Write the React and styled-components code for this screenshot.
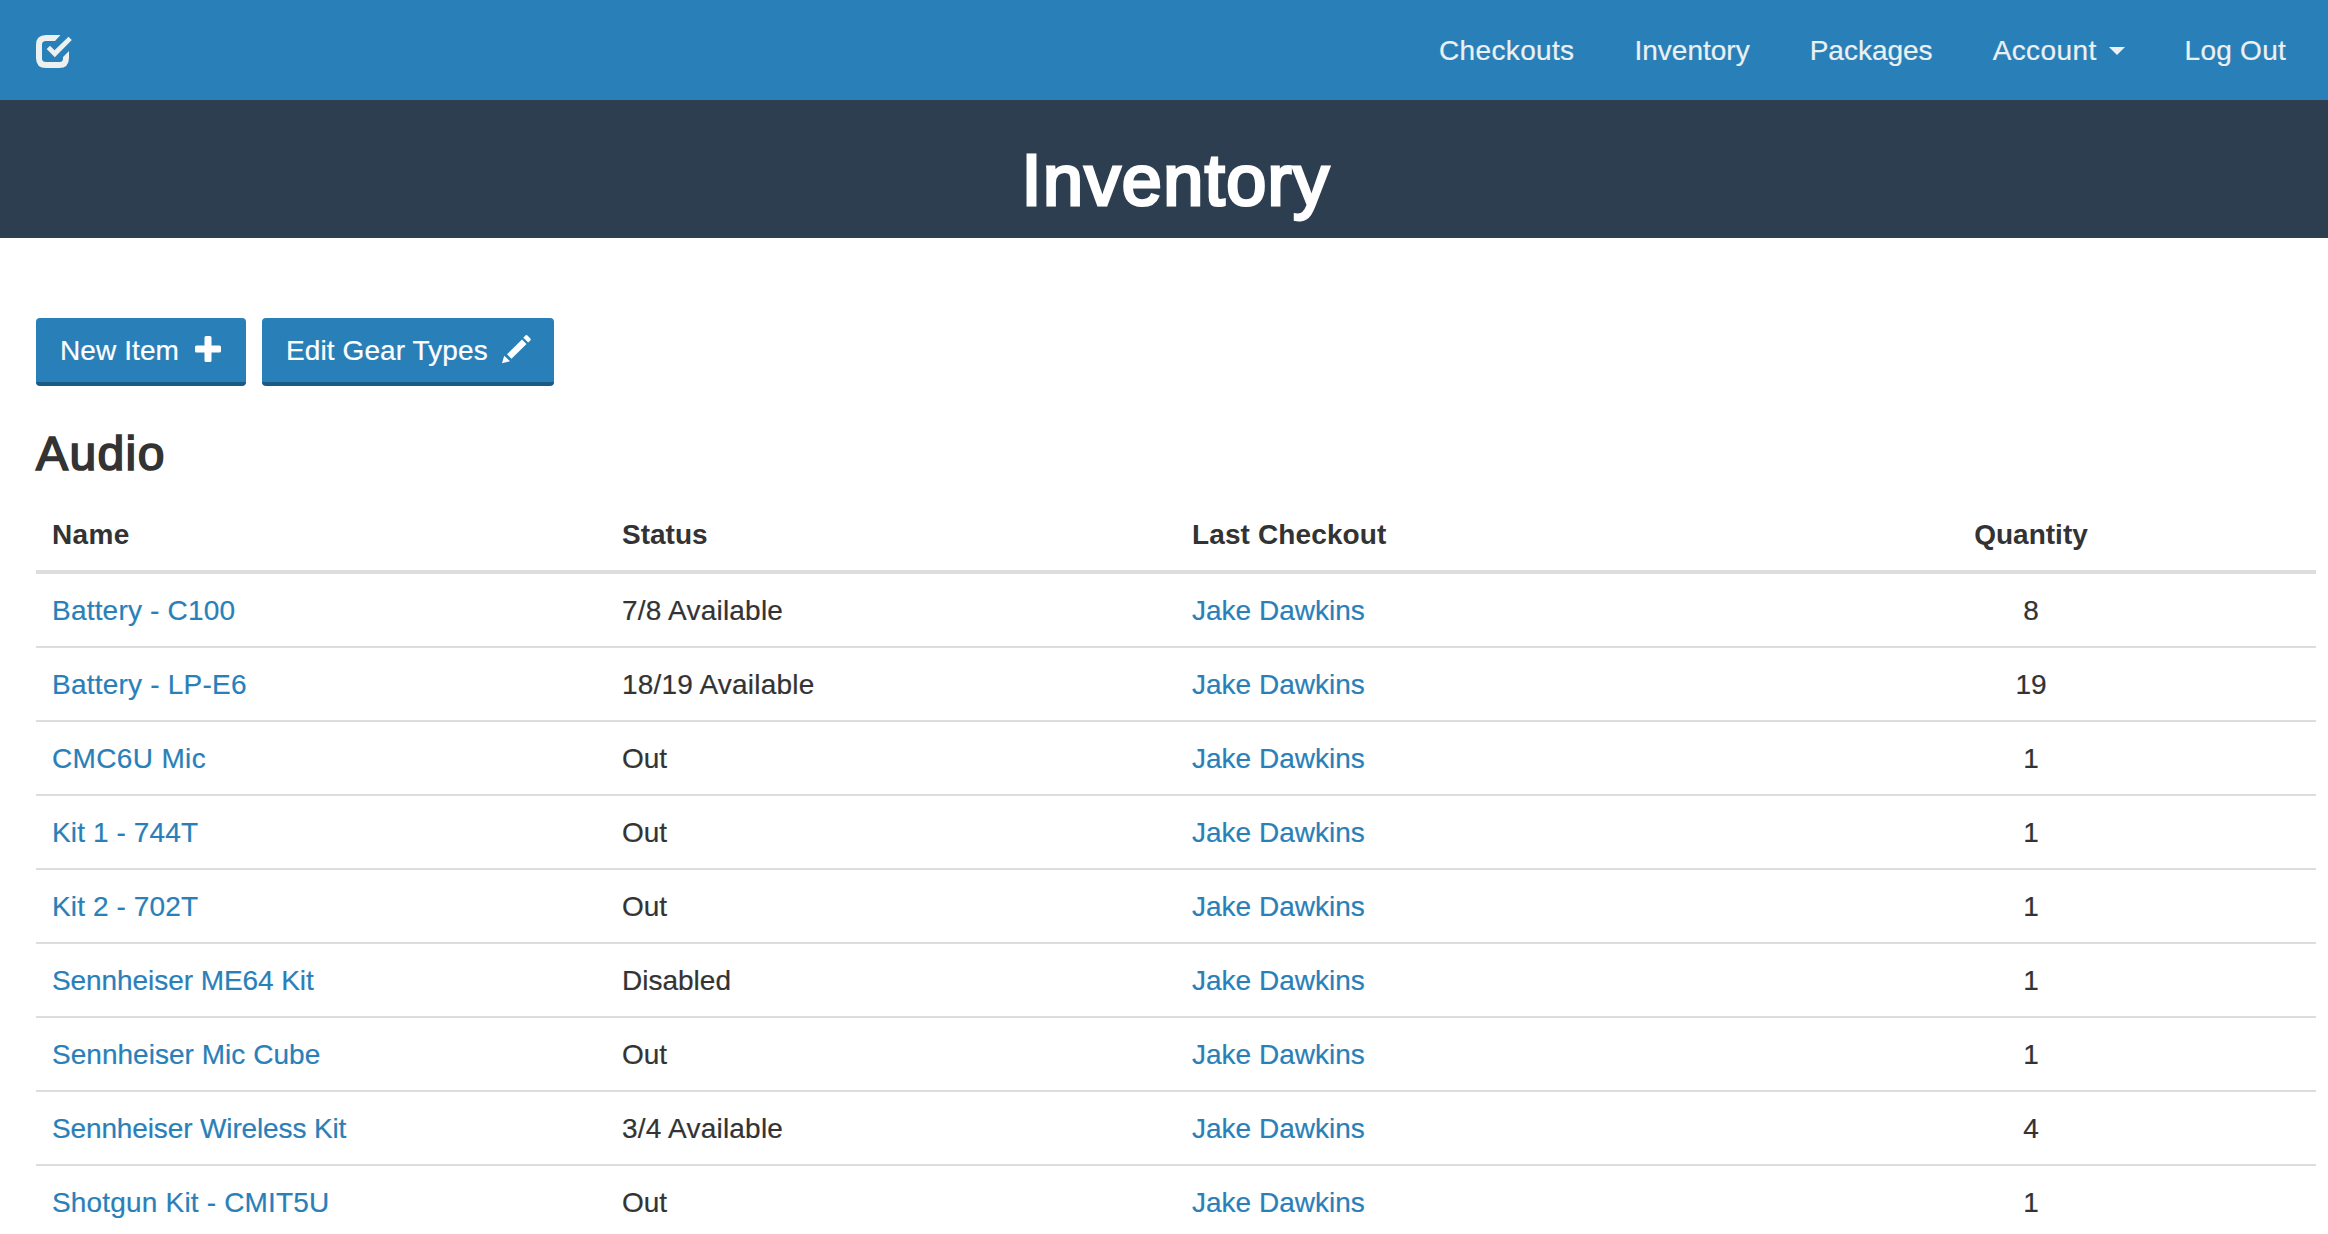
import React from "react";
import styled, { createGlobalStyle } from "styled-components";

const Global = createGlobalStyle`
  * { box-sizing: border-box; }
  body {
    margin: 0;
    height: 1234px;
    overflow: hidden;
    background: #fff;
    color: #333;
    font: 28px/40px "Liberation Sans", Arial, sans-serif;
    -webkit-text-stroke: 0.2px currentColor;
  }
`;

const NavBar = styled.header`
  display: flex;
  align-items: center;
  justify-content: space-between;
  height: 100px;
  padding: 2px 12px 0 36px;
  background: #2980b9;
`;
const LogoLink = styled.a`
  display: flex;
  color: #ecf0f1;
`;
const NavList = styled.nav`
  display: flex;
`;
const NavLink = styled.a`
  display: flex;
  align-items: center;
  padding: 0 30px;
  color: #ecf0f1;
  white-space: nowrap;
  letter-spacing: ${(p) => p.$track || 0}px;
`;
const Caret = styled.span`
  margin-left: 12px;
  border: 8px solid transparent;
  border-top-color: currentColor;
  border-bottom: 0;
`;
const TitleBand = styled.div`
  display: flex;
  justify-content: center;
  height: 138px;
  padding: 40px 12px 0 36px;
  background: #2c3e50;
`;
const Title = styled.h1`
  margin: 0;
  color: #fff;
  font-size: 72px;
  line-height: 81px;
  font-weight: 400;
  letter-spacing: 1.4px;
  -webkit-text-stroke: 3.1px #fff;
`;
const Main = styled.main`
  padding: 80px 12px 0 36px;
`;
const Actions = styled.div`
  display: flex;
  gap: 16px;
`;
const Button = styled.a`
  display: flex;
  align-items: center;
  gap: ${(p) => p.$gap}px;
  width: ${(p) => p.$width}px;
  height: 68px;
  padding: 2px 0 0 24px;
  border-bottom: 4px solid #1c5a85;
  border-radius: 4px;
  background: #2980b9;
  color: #fff;
  white-space: nowrap;
  letter-spacing: 0.1px;

  svg {
    margin-bottom: 4px;
  }
`;
const Section = styled.h2`
  margin: 40px 0 0;
  height: 72px;
  font-size: 48px;
  line-height: 55px;
  font-weight: 400;
  letter-spacing: 1.4px;
  -webkit-text-stroke: 1.7px #333;
`;
const Table = styled.table`
  width: 100%;
  table-layout: fixed;
  border-collapse: separate;
  border-spacing: 0;
`;
const HeadCell = styled.th`
  height: 76px;
  padding: 2px 16px 0;
  border-bottom: 4px solid #ddd;
  text-align: ${(p) => (p.$center ? "center" : "left")};
  letter-spacing: ${(p) => p.$track || 0}px;
  -webkit-text-stroke: 0;
`;
const Cell = styled.td`
  height: 74px;
  padding: 2px 16px 0;
  border-bottom: 2px solid #ddd;
  text-align: ${(p) => (p.$center ? "center" : "left")};
  letter-spacing: ${(p) => p.$track || 0}px;
`;
const ItemLink = styled.a`
  color: #2980b9;
  -webkit-text-stroke: 0.2px #2980b9;
`;

const rows = [
  { name: "Battery - C100", track: 0.2, status: "7/8 Available", statusTrack: 0.22, quantity: 8 },
  { name: "Battery - LP-E6", track: 0.22, status: "18/19 Available", statusTrack: 0.2, quantity: 19 },
  { name: "CMC6U Mic", track: 0.35, status: "Out", quantity: 1 },
  { name: "Kit 1 - 744T", track: 0.12, status: "Out", quantity: 1 },
  { name: "Kit 2 - 702T", track: 0.12, status: "Out", quantity: 1 },
  { name: "Sennheiser ME64 Kit", track: -0.07, status: "Disabled", quantity: 1 },
  { name: "Sennheiser Mic Cube", track: 0.03, status: "Out", quantity: 1 },
  { name: "Sennheiser Wireless Kit", track: -0.13, status: "3/4 Available", statusTrack: 0.22, quantity: 4 },
  { name: "Shotgun Kit - CMIT5U", track: 0.18, status: "Out", quantity: 1 },
];

const CheckLogo = () => (
  <svg width="36" height="34" viewBox="0 0 36 34" fill="currentColor">
    <path d="M24.5 1H10Q0 1 0 11V24Q0 34 10 34H23Q33 34 33 24V17L27 23V24.5Q27 28 23.5 28H10Q6 28 6 24.5V10.5Q6 7 10 7H19Z" />
    <path d="M10.7 15L14 11.7L18.5 16.2L32.5 2.7L35.8 6L18.8 23.3Z" />
  </svg>
);
const PlusIcon = () => (
  <svg width="26" height="26" viewBox="0 0 26 26" fill="currentColor">
    <path d="M11 0h4q1.500 0 1.500 1.500v8h8q1.500 0 1.500 1.500v4q0 1.500-1.500 1.500h-8v8q0 1.500-1.500 1.500h-4q-1.500 0-1.500-1.500v-8h-8q-1.500 0-1.500-1.500v-4q0-1.500 1.500-1.500h8v-8q0-1.500 1.500-1.500z" />
  </svg>
);
const PencilIcon = () => (
  <svg width="29" height="30" viewBox="0 0 29 30" fill="currentColor">
    <path d="M0 29.300L2.200 21.700L8 27.300ZM5 20.300L20 5.500L24.500 10L9.500 24.700ZM21.300 3.800L23.300 1.600Q24.500 .6 25.700 1.700L28.200 4.200Q29.300 5.500 28.300 6.500L26.200 8.600Z" />
  </svg>
);

export default function App() {
  return (
    <>
      <Global />
      <NavBar>
        <LogoLink><CheckLogo /></LogoLink>
        <NavList>
          <NavLink $track={0.35}>Checkouts</NavLink>
          <NavLink>Inventory</NavLink>
          <NavLink>Packages</NavLink>
          <NavLink $track={0.4}>Account<Caret /></NavLink>
          <NavLink $track={0.25}>Log Out</NavLink>
        </NavList>
      </NavBar>
      <TitleBand><Title>Inventory</Title></TitleBand>
      <Main>
        <Actions>
          <Button $width={210} $gap={16}>New Item<PlusIcon /></Button>
          <Button $width={292} $gap={14}>Edit Gear Types<PencilIcon /></Button>
        </Actions>
        <Section>Audio</Section>
        <Table>
          <thead>
            <tr>
              <HeadCell $track={0.35}>Name</HeadCell>
              <HeadCell>Status</HeadCell>
              <HeadCell $track={0.12}>Last Checkout</HeadCell>
              <HeadCell $center>Quantity</HeadCell>
            </tr>
          </thead>
          <tbody>
            {rows.map((row) => (
              <tr key={row.name}>
                <Cell $track={row.track}><ItemLink>{row.name}</ItemLink></Cell>
                <Cell $track={row.statusTrack}>{row.status}</Cell>
                <Cell><ItemLink>Jake Dawkins</ItemLink></Cell>
                <Cell $center>{row.quantity}</Cell>
              </tr>
            ))}
          </tbody>
        </Table>
      </Main>
    </>
  );
}
